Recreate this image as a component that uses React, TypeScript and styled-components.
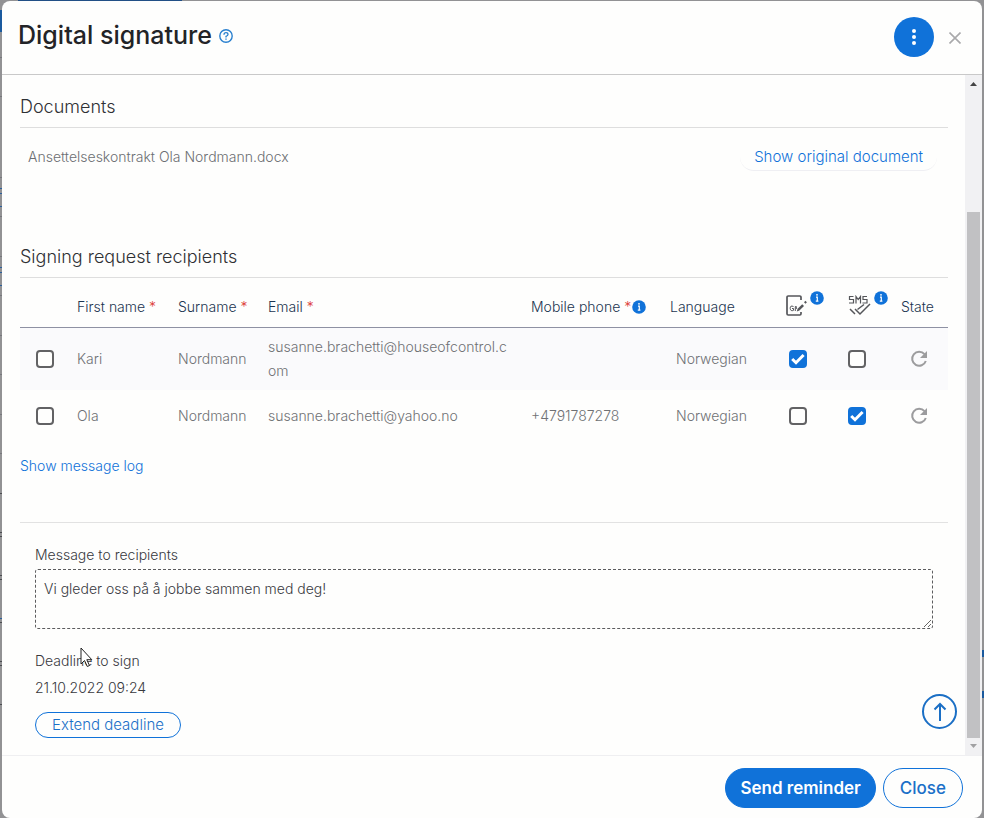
import React from "react";
import styled, { createGlobalStyle, css } from "styled-components";

const blue = "#1072d9";

const GlobalStyle = createGlobalStyle`
  *, *::before, *::after { box-sizing: border-box; }
  body {
    margin: 0;
    background: #929294;
    font-family: Inter, "Liberation Sans", sans-serif;
    font-size: 14px;
    font-weight: 300;
    line-height: 24px;
    color: #38393d;
  }
  button, input, textarea { font: inherit; margin: 0; }
  button { cursor: pointer; }
`;

/* Edges of the dimmed page that stay visible around the dialog. */
const edgeLines = (color: string, tops: number[]) =>
  tops
    .map((top) => `linear-gradient(${color}, ${color}) 0 ${top}px / 2px 1px no-repeat`)
    .join(", ");

const Backdrop = styled.div`
  position: relative;
  height: 100vh;
  padding: 1px 2px 0;
  background:
    linear-gradient(#214f86, #214f86) 18px 0 / 164px 1px no-repeat,
    linear-gradient(#1a5a9e, #1a5a9e) 0 10px / 2px 22px no-repeat,
    linear-gradient(#1a5a9e, #1a5a9e) 100% 650px / 2px 7px no-repeat,
    linear-gradient(#1a5a9e, #1a5a9e) 100% 691px / 2px 7px no-repeat,
    ${edgeLines("#2a5f9c", [188, 193, 206, 267, 272, 285, 618])},
    ${edgeLines("#4a4c50", [493, 532, 536, 575, 579, 622, 661, 665, 704])},
    ${edgeLines("#77787c", [57, 96, 177, 216, 256, 295, 335, 374, 414, 453])},
    #929294;
`;

const Dialog = styled.main`
  display: flex;
  flex-direction: column;
  height: 100%;
  background: #fefefd;
  border-radius: 8px;
  overflow: hidden;
`;

const Header = styled.header`
  display: flex;
  align-items: center;
  justify-content: space-between;
  height: 74px;
  flex: none;
  padding: 0 18px 2px 16px;
  border-bottom: 1px solid #c9c9c9;
`;

const TitleGroup = styled.div`
  display: flex;
  align-items: center;
  gap: 7px;
  padding-bottom: 4px;
`;

const Title = styled.h1`
  margin: 0;
  font-size: 25px;
  line-height: 32px;
  font-weight: 500;
  color: #232427;
`;

const HeaderActions = styled.div`
  display: flex;
  align-items: center;
  gap: 12px;
`;

const IconButton = styled.button`
  display: flex;
  align-items: center;
  justify-content: center;
  padding: 0;
  border: 0;
  background: transparent;
  color: ${blue};
`;

const HelpButton = styled(IconButton)`
  margin-top: 2px;
`;

const MenuButton = styled(IconButton)`
  width: 40px;
  height: 40px;
  border-radius: 50%;
  background: ${blue};
  color: #fff;
`;

const CloseIconButton = styled(IconButton)`
  width: 18px;
  height: 40px;
  padding-top: 2px;
  color: #a9a9ab;
`;

const Body = styled.div`
  display: flex;
  flex: 1;
  min-height: 0;
`;

const Content = styled.div`
  flex: 1;
  min-width: 0;
  padding: 16px 17px 0 18px;
  overflow: hidden;
`;

const SectionTitle = styled.h2`
  margin: 0;
  padding: 4px 0 8px;
  border-bottom: 1px solid #dedede;
  font-size: 18px;
  line-height: 24px;
  font-weight: 300;
  color: #2f3034;
`;

const DocumentRow = styled.div`
  display: flex;
  align-items: center;
  justify-content: space-between;
  height: 32px;
  margin: 13px 11px 68px 8px;
  color: #6c6e72;
`;

const ShowButton = styled.button`
  height: 28px;
  padding: 0 14px;
  border: 0;
  border-bottom: 1px solid #efeff3;
  border-radius: 14px;
  background: transparent;
  font-size: 15px;
  color: #1072d9;
`;

const Table = styled.table`
  width: 100%;
  table-layout: fixed;
  border-collapse: separate;
  border-spacing: 0;
  color: #6f7174;
`;

const Col = styled.col<{ $w?: number }>`
  width: ${({ $w }) => ($w ? `${$w}px` : "auto")};
`;

const Th = styled.th`
  height: 50px;
  padding: 10px 0 0 8px;
  border-bottom: 1px solid #8e91a3;
  text-align: left;
  vertical-align: top;
  line-height: 20px;
  font-weight: 300;
  color: #1c3550;
  white-space: nowrap;
`;

const HeadCell = styled.div`
  display: flex;
  align-items: center;
  gap: 1px;
  height: 20px;
  margin-top: 9px;
`;

const IconHeadCell = styled.div`
  display: flex;
  align-items: flex-start;
  gap: 3px;
  margin-top: 3px;
  svg:first-child { margin-top: 4px; }
`;

const Required = styled.span`
  color: #dd3f3a;
`;

const Row = styled.tr<{ $tinted?: boolean }>`
  background: ${({ $tinted }) => ($tinted ? "#fafafc" : "transparent")};
`;

const Td = styled.td<{ $indent?: number }>`
  height: 52px;
  padding: 7px 8px 7px ${({ $indent }) => $indent ?? 8}px;
  word-break: break-all;
`;

const CheckBox = styled.input`
  appearance: none;
  display: block;
  width: 18px;
  height: 18px;
  border: 2px solid #626264;
  border-radius: 4px;
  background: #fefefd;
  &:checked {
    border-color: ${blue};
    background: ${blue} url("data:image/svg+xml,%3Csvg xmlns='http://www.w3.org/2000/svg' viewBox='0 0 14 14'%3E%3Cpath d='M1.200 7l3.800 3.700L12.600 3' fill='none' stroke='white' stroke-width='3'/%3E%3C/svg%3E") center / 14px no-repeat;
  }
`;

const Link = styled.a`
  display: inline-block;
  margin-top: 12px;
  color: #1072d9;
  text-decoration: none;
`;

const Form = styled.section`
  margin-top: 44px;
  padding: 20px 15px 0;
  border-top: 1px solid #e2e2e2;
`;

const Label = styled.label`
  display: block;
`;

const Message = styled.textarea`
  display: block;
  width: 100%;
  height: 60px;
  margin: 2px 0 20px;
  padding: 7px 8px;
  border: 1px dashed #5c5c5e;
  border-radius: 3px;
  background: transparent;
  color: #38393d;
  resize: vertical;
  outline: 0;
`;

const Deadline = styled.div`
  margin: 3px 0 12px;
`;

const PillButton = styled.button<{ $size: "small" | "large"; $primary?: boolean }>`
  border: 1px solid ${blue};
  background: ${({ $primary }) => ($primary ? blue : "transparent")};
  color: ${({ $primary }) => ($primary ? "#fff" : "#1b70c8")};
  ${({ $size }) =>
    $size === "small"
      ? css`
          display: block;
          height: 26px;
          padding: 0 16px;
          border-radius: 13px;
          font-size: 15px;
          font-weight: 300;
        `
      : css`
          height: 40px;
          padding: 0 16px;
          border-radius: 20px;
          font-size: 17px;
          font-weight: 500;
        `}
  ${({ $primary }) =>
    $primary &&
    css`
      padding: 0 14px;
      font-weight: 600;
    `}
`;

const ScrollTrack = styled.div`
  display: flex;
  flex-direction: column;
  align-items: center;
  width: 17px;
  flex: none;
  background: #f1f1f3;
`;

const ScrollArrow = styled.svg`
  width: 17px;
  height: 17px;
  flex: none;
`;

const ScrollSpace = styled.div`
  flex: 120;
`;

const ScrollThumb = styled.div`
  flex: 526;
  width: 13px;
  background: #c1c1c3;
`;

const ToTop = styled.button`
  position: absolute;
  right: 27px;
  bottom: 89px;
  display: flex;
  align-items: center;
  justify-content: center;
  width: 35px;
  height: 35px;
  padding: 0;
  border: 2px solid #1b6fc5;
  border-radius: 50%;
  background: #fefefd;
  color: #1b6fc5;
`;

const Footer = styled.footer`
  display: flex;
  justify-content: flex-end;
  gap: 7px;
  flex: none;
  padding: 12px 19px 10px;
  border-top: 1px solid #efeff1;
`;

const Cursor = styled.svg`
  position: absolute;
  left: 80px;
  top: 647px;
  width: 14px;
  height: 21px;
`;

const InfoIcon = () => (
  <svg width="14" height="14" viewBox="0 0 14 14" aria-hidden="true">
    <circle cx="7" cy="7" r="6.8" fill={blue} />
    <path d="M6 6.2h1.3v4M5.8 10.2h2.6" fill="none" stroke="#fff" strokeWidth="1.2" />
    <circle cx="7" cy="3.8" r="0.9" fill="#fff" />
  </svg>
);

const SignIcon = () => (
  <svg width="21" height="21" viewBox="0 0 21 21" fill="none" stroke="#55565a" aria-label="Signature">
    <path d="M15 5V2.200Q15 1 13.800 1H2.200Q1 1 1 2.200v16.600Q1 20 2.200 20H13.800q1.200 0 1.200-1.200V17" strokeWidth="1.700" />
    <path d="M7.500 11.500Q4 10 4.200 13.500q.4 3.200 3.300 1.800v-1.800H6M9.300 16v-4.500h1v2.500" strokeWidth="1" />
    <path d="M10.800 16.500l.8-2.800 4.600-4.400 1.800 1.800-4.600 4.400z" fill="#55565a" stroke="none" />
    <path d="M18.700 6.500l1.500 1.500" strokeWidth="2" />
  </svg>
);

const SmsIcon = () => (
  <svg width="23" height="21" viewBox="0 0 23 21" fill="none" stroke="#55565a" aria-label="SMS">
    <path d="M5.500 1.500H1.500v3h4v3.500H1M8 8.500v-7l2.200 3 2.300-3v7M19 1.500H15v3h4v3.500H14.500" strokeWidth="1.200" />
    <path d="M2 14l5 5M7 14l5 5L22 9M9.500 14.500L16 9.500" strokeWidth="1.500" />
  </svg>
);

const RefreshIcon = () => (
  <svg width="18" height="18" viewBox="0 0 18 18" fill="none" aria-hidden="true">
    <path d="M14.500 4.200A7 7 0 1 0 15.800 11" stroke="#9c9c9e" strokeWidth="2" />
    <path d="M17 1v7h-7z" fill="#9c9c9e" />
  </svg>
);

interface Recipient {
  first: string;
  surname: string;
  email: string;
  phone: string;
  language: string;
  esign: boolean;
  sms: boolean;
}

const recipients: Recipient[] = [
  { first: "Kari", surname: "Nordmann", email: "susanne.brachetti@houseofcontrol.com", phone: "", language: "Norwegian", esign: true, sms: false },
  { first: "Ola", surname: "Nordmann", email: "susanne.brachetti@yahoo.no", phone: "+4791787278", language: "Norwegian", esign: false, sms: true },
];

export default function App() {
  return (
    <>
      <GlobalStyle />
      <Backdrop>
        <Dialog>
          <Header>
            <TitleGroup>
              <Title>Digital signature</Title>
              <HelpButton aria-label="Help">
                <svg width="14" height="14" viewBox="0 0 14 14" fill="none" stroke="#2a80cf">
                  <circle cx="7" cy="7" r="6.200" strokeWidth="1.400" />
                  <path d="M5 5.700Q5 3.600 7 3.600t2 1.800Q9 6.400 7 7.400v1" strokeWidth="1.300" />
                  <path d="M7 9.400v1.300" strokeWidth="1.400" />
                </svg>
              </HelpButton>
            </TitleGroup>
            <HeaderActions>
              <MenuButton aria-label="More actions">
                <svg width="4" height="16" viewBox="0 0 4 16" fill="#fff">
                  <circle cx="2" cy="2" r="2" />
                  <circle cx="2" cy="8" r="2" />
                  <circle cx="2" cy="14" r="2" />
                </svg>
              </MenuButton>
              <CloseIconButton aria-label="Close dialog">
                <svg width="12" height="12" viewBox="0 0 12 12" stroke="currentColor" strokeWidth="1.600">
                  <path d="M.5.5l11 11M11.500.5l-11 11" />
                </svg>
              </CloseIconButton>
            </HeaderActions>
          </Header>
          <Body>
            <Content>
              <SectionTitle>Documents</SectionTitle>
              <DocumentRow>
                <span>Ansettelseskontrakt Ola Nordmann.docx</span>
                <ShowButton>Show original document</ShowButton>
              </DocumentRow>
              <SectionTitle>Signing request recipients</SectionTitle>
              <Table>
                <colgroup>
                  <Col $w={49} />
                  <Col $w={101} />
                  <Col $w={90} />
                  <Col />
                  <Col $w={139} />
                  <Col $w={116} />
                  <Col $w={62} />
                  <Col $w={53} />
                  <Col $w={55} />
                </colgroup>
                <thead>
                  <tr>
                    <Th aria-label="Select" />
                    <Th><HeadCell><span>First name <Required>*</Required></span></HeadCell></Th>
                    <Th><HeadCell><span>Surname <Required>*</Required></span></HeadCell></Th>
                    <Th><HeadCell><span>Email <Required>*</Required></span></HeadCell></Th>
                    <Th><HeadCell><span>Mobile phone <Required>*</Required></span><InfoIcon /></HeadCell></Th>
                    <Th><HeadCell>Language</HeadCell></Th>
                    <Th><IconHeadCell><SignIcon /><InfoIcon /></IconHeadCell></Th>
                    <Th><IconHeadCell><SmsIcon /><InfoIcon /></IconHeadCell></Th>
                    <Th><HeadCell>State</HeadCell></Th>
                  </tr>
                </thead>
                <tbody>
                  {recipients.map((r, i) => (
                    <Row key={r.email} $tinted={i === 0}>
                      <Td $indent={16}><CheckBox type="checkbox" aria-label={`Select ${r.first}`} /></Td>
                      <Td>{r.first}</Td>
                      <Td>{r.surname}</Td>
                      <Td>{r.email}</Td>
                      <Td>{r.phone}</Td>
                      <Td $indent={14}>{r.language}</Td>
                      <Td $indent={11}><CheckBox type="checkbox" aria-label="Electronic signature" defaultChecked={r.esign} /></Td>
                      <Td><CheckBox type="checkbox" aria-label="SMS" defaultChecked={r.sms} /></Td>
                      <Td $indent={17}><IconButton aria-label="Refresh state"><RefreshIcon /></IconButton></Td>
                    </Row>
                  ))}
                </tbody>
              </Table>
              <Link href="#log">Show message log</Link>
              <Form>
                <Label htmlFor="message">Message to recipients</Label>
                <Message id="message" defaultValue="Vi gleder oss på å jobbe sammen med deg!" />
                <div>Deadline to sign</div>
                <Deadline>21.10.2022 09:24</Deadline>
                <PillButton $size="small">Extend deadline</PillButton>
              </Form>
            </Content>
            <ScrollTrack aria-hidden="true">
              <ScrollArrow viewBox="0 0 17 17"><path d="M5 11l3.500-4 3.500 4z" fill="#444" /></ScrollArrow>
              <ScrollSpace />
              <ScrollThumb />
              <ScrollArrow viewBox="0 0 17 17"><path d="M5 6l3.500 4L12 6z" fill="#a0a0a2" /></ScrollArrow>
            </ScrollTrack>
          </Body>
          <Footer>
            <PillButton $size="large" $primary>Send reminder</PillButton>
            <PillButton $size="large">Close</PillButton>
          </Footer>
        </Dialog>
        <ToTop aria-label="Scroll to top">
          <svg width="16" height="20" viewBox="0 0 16 20" fill="none" stroke="currentColor" strokeWidth="2">
            <path d="M8 19V2M2.500 7.500L8 2l5.500 5.500" />
          </svg>
        </ToTop>
        <Cursor viewBox="0 0 14 21" aria-hidden="true">
          <path d="M1 1v16l3.500-3.500 2.800 6 2.200-1-2.700-5.800h5z" fill="#fff" stroke="#222" />
        </Cursor>
      </Backdrop>
    </>
  );
}
